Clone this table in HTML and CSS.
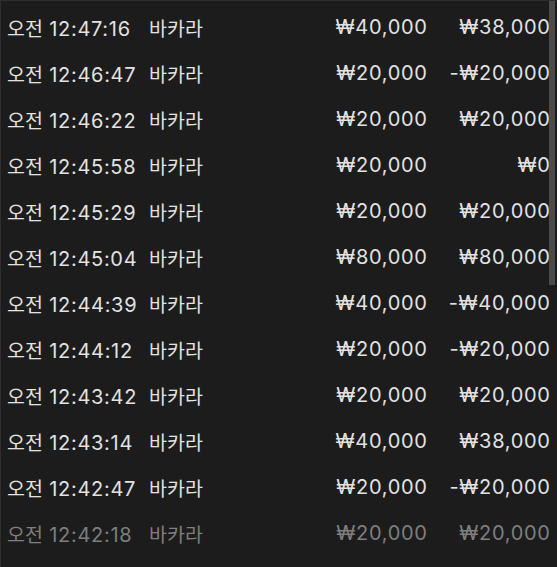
FILE: index.html
```html
<!DOCTYPE html>
<html lang="ko">
<head>
<meta charset="utf-8">
<link rel="stylesheet" href="styles.css">
</head>
<body>
<div class="panel">
  <div class="list">
    <div class="row"><span class="time"><span class="ko">오전</span> 12:47:16</span><span class="ko">바카라</span><span class="bet">₩40,000</span><span class="win">₩38,000</span></div>
    <div class="row"><span class="time"><span class="ko">오전</span> 12:46:47</span><span class="ko">바카라</span><span class="bet">₩20,000</span><span class="win">-₩20,000</span></div>
    <div class="row"><span class="time"><span class="ko">오전</span> 12:46:22</span><span class="ko">바카라</span><span class="bet">₩20,000</span><span class="win">₩20,000</span></div>
    <div class="row"><span class="time"><span class="ko">오전</span> 12:45:58</span><span class="ko">바카라</span><span class="bet">₩20,000</span><span class="win">₩0</span></div>
    <div class="row"><span class="time"><span class="ko">오전</span> 12:45:29</span><span class="ko">바카라</span><span class="bet">₩20,000</span><span class="win">₩20,000</span></div>
    <div class="row"><span class="time"><span class="ko">오전</span> 12:45:04</span><span class="ko">바카라</span><span class="bet">₩80,000</span><span class="win">₩80,000</span></div>
    <div class="row"><span class="time"><span class="ko">오전</span> 12:44:39</span><span class="ko">바카라</span><span class="bet">₩40,000</span><span class="win">-₩40,000</span></div>
    <div class="row"><span class="time"><span class="ko">오전</span> 12:44:12</span><span class="ko">바카라</span><span class="bet">₩20,000</span><span class="win">-₩20,000</span></div>
    <div class="row"><span class="time"><span class="ko">오전</span> 12:43:42</span><span class="ko">바카라</span><span class="bet">₩20,000</span><span class="win">₩20,000</span></div>
    <div class="row"><span class="time"><span class="ko">오전</span> 12:43:14</span><span class="ko">바카라</span><span class="bet">₩40,000</span><span class="win">₩38,000</span></div>
    <div class="row"><span class="time"><span class="ko">오전</span> 12:42:47</span><span class="ko">바카라</span><span class="bet">₩20,000</span><span class="win">-₩20,000</span></div>
    <div class="row faded"><span class="time"><span class="ko">오전</span> 12:42:18</span><span class="ko">바카라</span><span class="bet">₩20,000</span><span class="win">₩20,000</span></div>
  </div>
  <div class="scrollbar"></div>
</div>
</body>
</html>
```
FILE: styles.css
```css
html, body {
  margin: 0;
  padding: 0;
  background: #1c1c1c;
}
.panel {
  position: relative;
  width: 557px;
  height: 567px;
  box-sizing: border-box;
  overflow: hidden;
  background: #1c1c1c;
  border-top: 1px solid #2e2e2e;
  border-left: 1px solid #2e2e2e;
}
.list {
  display: flex;
  flex-direction: column;
  padding: 3px 7px 0 6px;
}
.row {
  display: grid;
  grid-template-columns: 142px 151px 127px 123px;
  height: 46px;
  align-items: center;
  font-family: Inter, "Noto Sans CJK KR", sans-serif;
  font-size: 20px;
  letter-spacing: 0.7px;
  color: #e2e2e2;
  white-space: nowrap;
}
.ko {
  font-family: "Noto Sans CJK KR", sans-serif;
  font-size: 19.5px;
  letter-spacing: 0;
}
.row.faded {
  color: #7e7e7e;
}
.bet, .win {
  text-align: right;
  margin-right: -0.7px;
}
.scrollbar {
  position: absolute;
  top: 0;
  right: 2px;
  width: 6px;
  height: 284px;
  background: #4a4a4a;
}
```
